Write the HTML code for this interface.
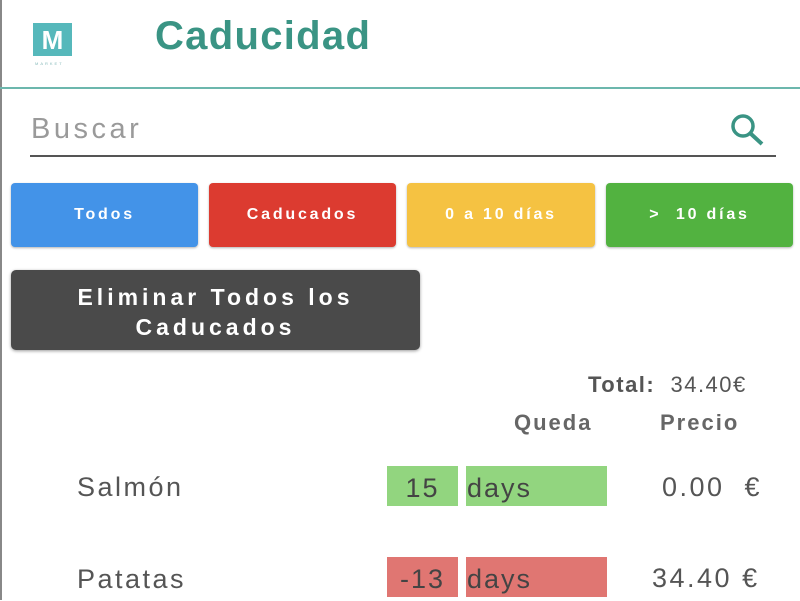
<!DOCTYPE html>
<html><head><meta charset="utf-8"><style>
body{margin:0;width:800px;height:600px;overflow:hidden;background:#fff;font-family:"Liberation Sans",sans-serif;position:relative}
.a{position:absolute}
.btn{position:absolute;top:183px;height:64px;border-radius:4px;color:#fff;font-weight:bold;font-size:16px;letter-spacing:2.8px;display:flex;align-items:center;justify-content:center;box-shadow:0 1px 2px rgba(0,0,0,.3)}
.box{position:absolute;height:40px;font-size:27px;color:#444;line-height:44px;letter-spacing:2px}
.t{font-size:27px;color:#555;letter-spacing:2.5px}
</style></head><body>
<div class="a" style="left:0;top:0;width:2px;height:600px;background:#888"></div>
<div class="a" style="left:33px;top:23px;width:39px;height:33px;background:#56b8bb;color:#fff;font-weight:bold;font-size:26px;text-align:center;line-height:34px">M</div>
<div class="a" style="left:35px;top:61px;font-size:4px;color:#8bb;letter-spacing:2px">MARKET</div>
<div class="a" style="left:155px;top:14px;font-size:40px;font-weight:bold;color:#3a9484;letter-spacing:1.3px">Caducidad</div>
<div class="a" style="left:0;top:87px;width:800px;height:2px;background:#6cb7ad"></div>
<div class="a" style="left:31px;top:113px;font-size:29px;color:#9a9a9a;letter-spacing:3.5px">Buscar</div>
<svg class="a" style="left:728px;top:112px" width="40" height="36" viewBox="0 0 40 36"><circle cx="15" cy="14" r="10" fill="none" stroke="#3a9484" stroke-width="3.5"/><line x1="22" y1="21" x2="34" y2="32" stroke="#3a9484" stroke-width="4"/></svg>
<div class="a" style="left:30px;top:155px;width:746px;height:2px;background:#555"></div>
<div class="btn" style="left:11px;width:187px;background:#4393e8">Todos</div>
<div class="btn" style="left:209px;width:187px;background:#dc3b30">Caducados</div>
<div class="btn" style="left:407px;width:188px;background:#f5c242">0 a 10 días</div>
<div class="btn" style="left:606px;width:187px;background:#52b240">&gt; &nbsp;10 días</div>
<div class="a" style="left:11px;top:270px;width:409px;height:80px;border-radius:5px;background:#4a4a4a;color:#fff;font-weight:bold;font-size:23px;letter-spacing:4px;text-align:center;line-height:30px;padding-top:12px;box-sizing:border-box;box-shadow:0 1px 3px rgba(0,0,0,.4)">Eliminar Todos los<br>Caducados</div>
<div class="a" style="left:588px;top:372px;font-size:22px;color:#555;letter-spacing:1.5px"><b>Total:</b>&nbsp; 34.40€</div>
<div class="a" style="left:514px;top:410px;font-size:22px;font-weight:bold;color:#666;letter-spacing:2px">Queda</div>
<div class="a" style="left:660px;top:410px;font-size:22px;font-weight:bold;color:#666;letter-spacing:2px">Precio</div>
<div class="a t" style="left:77px;top:472px">Salmón</div>
<div class="box" style="left:387px;top:466px;width:71px;background:#92d57f;text-align:center">15</div>
<div class="box" style="left:466px;top:466px;width:141px;background:#92d57f;padding-left:1px;box-sizing:border-box">days</div>
<div class="a t" style="left:662px;top:472px">0.00 &nbsp;€</div>
<div class="a t" style="left:77px;top:564px">Patatas</div>
<div class="box" style="left:387px;top:557px;width:71px;background:#e07672;text-align:center">-13</div>
<div class="box" style="left:466px;top:557px;width:141px;background:#e07672;padding-left:1px;box-sizing:border-box">days</div>
<div class="a t" style="left:652px;top:563px">34.40 €</div>
</body></html>
